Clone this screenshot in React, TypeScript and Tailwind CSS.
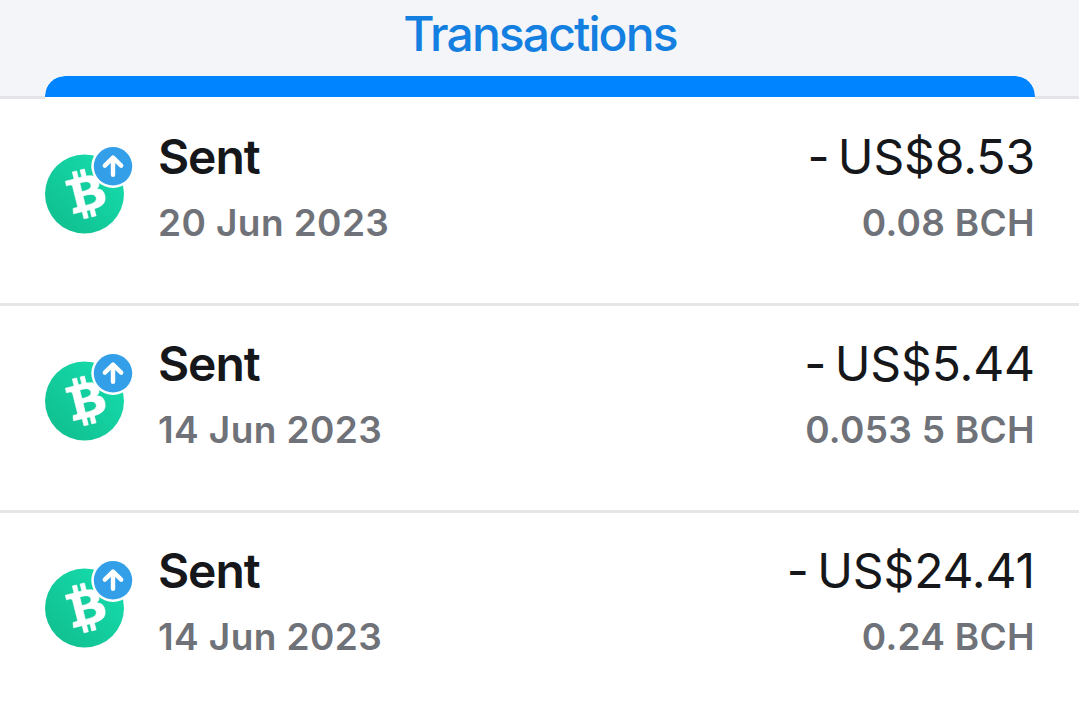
type Transaction = {
  id: number;
  label: string;
  date: string;
  fiat: string;
  amount: string;
};

const TRANSACTIONS: Transaction[] = [
  { id: 1, label: "Sent", date: "20 Jun 2023", fiat: "US$8.53", amount: "0.08 BCH" },
  { id: 2, label: "Sent", date: "14 Jun 2023", fiat: "US$5.44", amount: "0.053 5 BCH" },
  { id: 3, label: "Sent", date: "14 Jun 2023", fiat: "US$24.41", amount: "0.24 BCH" },
];

function CoinIcon() {
  return (
    <svg viewBox="0 0 32 32" className="h-20 w-20">
      <defs>
        <linearGradient id="coin" x1="0" y1="1" x2="1" y2="0">
          <stop offset="0" stopColor="#10bc8c" />
          <stop offset="1" stopColor="#16dfb0" />
        </linearGradient>
      </defs>
      <circle cx="15.8" cy="16" r="15.8" fill="url(#coin)" />
      <path
        fill="#fff"
        fillRule="evenodd"
        stroke="#fff"
        strokeWidth="0.25"
        transform="rotate(2 16 16)"
        d="M21.207 10.534c-.776-1.972-2.722-2.15-4.988-1.71l-.807-2.813-1.712.491.786 2.74c-.45.128-.908.27-1.363.41l-.79-2.758-1.711.49.805 2.813c-.368.114-.73.226-1.085.328l-.003-.01-2.362.677.525 1.83s1.258-.388 1.243-.358c.694-.199 1.035.139 1.2.468l.92 3.204c.047-.013.11-.029.184-.04l-.181.052 1.287 4.49c.032.227.004.612-.48.752.027.013-1.246.356-1.246.356l.247 2.143 2.228-.64c.415-.117.825-.227 1.226-.34l.817 2.845 1.71-.49-.807-2.815a65.74 65.74 0 001.372-.38l.802 2.803 1.713-.491-.814-2.84c2.831-.991 4.638-2.294 4.113-5.07-.422-2.234-1.724-2.912-3.471-2.836.848-.79 1.213-1.858.642-3.3zm-.65 6.77c.61 2.127-3.1 2.929-4.26 3.263l-1.081-3.77c1.16-.333 4.704-1.71 5.34.508zm-2.322-5.09c.554 1.935-2.547 2.58-3.514 2.857l-.98-3.419c.966-.277 3.915-1.455 4.494.563z"
      />
    </svg>
  );
}

function SentBadge() {
  return (
    <svg viewBox="0 0 44 44" className="absolute -top-[10px] left-[46px] h-11 w-11">
      <circle cx="22" cy="22.3" r="21.7" fill="#fff" />
      <circle cx="22" cy="22.3" r="19.2" fill="#339fe8" />
      <path
        d="M22 30.8V13.8M13.8 21.6l8.2-8 8.2 8"
        fill="none"
        stroke="#fff"
        strokeWidth="4.4"
        strokeLinecap="round"
        strokeLinejoin="round"
      />
    </svg>
  );
}

function TransactionRow({ tx }: { tx: Transaction }) {
  return (
    <li className="flex h-[207px] items-start border-b-[3px] border-[#e6e6e8] pr-11 pl-[45px] pt-7">
      <div className="relative mt-[27px] h-20 w-20 shrink-0">
        <CoinIcon />
        <SentBadge />
      </div>
      <div className="ml-[33px] flex-1">
        <p className="text-[48px] leading-[60px] font-semibold tracking-[-1.1px] text-[#15171a]">{tx.label}</p>
        <p className="mt-[13px] text-[37px] leading-[46px] font-semibold tracking-[0.4px] text-[#6f7278]">{tx.date}</p>
      </div>
      <div className="text-right whitespace-nowrap">
        <p className="text-[48px] leading-[60px] tracking-[-0.1px] text-[#15171a] [word-spacing:-5px]">- {tx.fiat}</p>
        <p className="mt-[13px] text-[37px] leading-[46px] font-semibold tracking-[0.3px] text-[#6f7278]">{tx.amount}</p>
      </div>
    </li>
  );
}

export default function App() {
  return (
    <main className="h-[713px] overflow-hidden bg-white font-['Inter',sans-serif]">
      <header className="flex h-[99px] flex-col justify-between bg-[#f4f5f8]">
        <h1 className="pt-1 pl-px text-center text-[48px] leading-[60px] font-medium tracking-[-1.9px] text-[#137fe0]">
          Transactions
        </h1>
        <div className="flex items-end">
          <div className="h-[3px] w-[45px] bg-[#e4e5e9]" />
          <div className="flex-1 bg-white pb-0.5 [clip-path:inset(0_round_20px_20px_0_0)]">
            <div className="h-[21px] rounded-t-[20px] bg-[#0084ff]" />
          </div>
          <div className="h-[3px] w-11 bg-[#e4e5e9]" />
        </div>
      </header>
      <ul>
        {TRANSACTIONS.map((tx) => (
          <TransactionRow key={tx.id} tx={tx} />
        ))}
      </ul>
    </main>
  );
}
